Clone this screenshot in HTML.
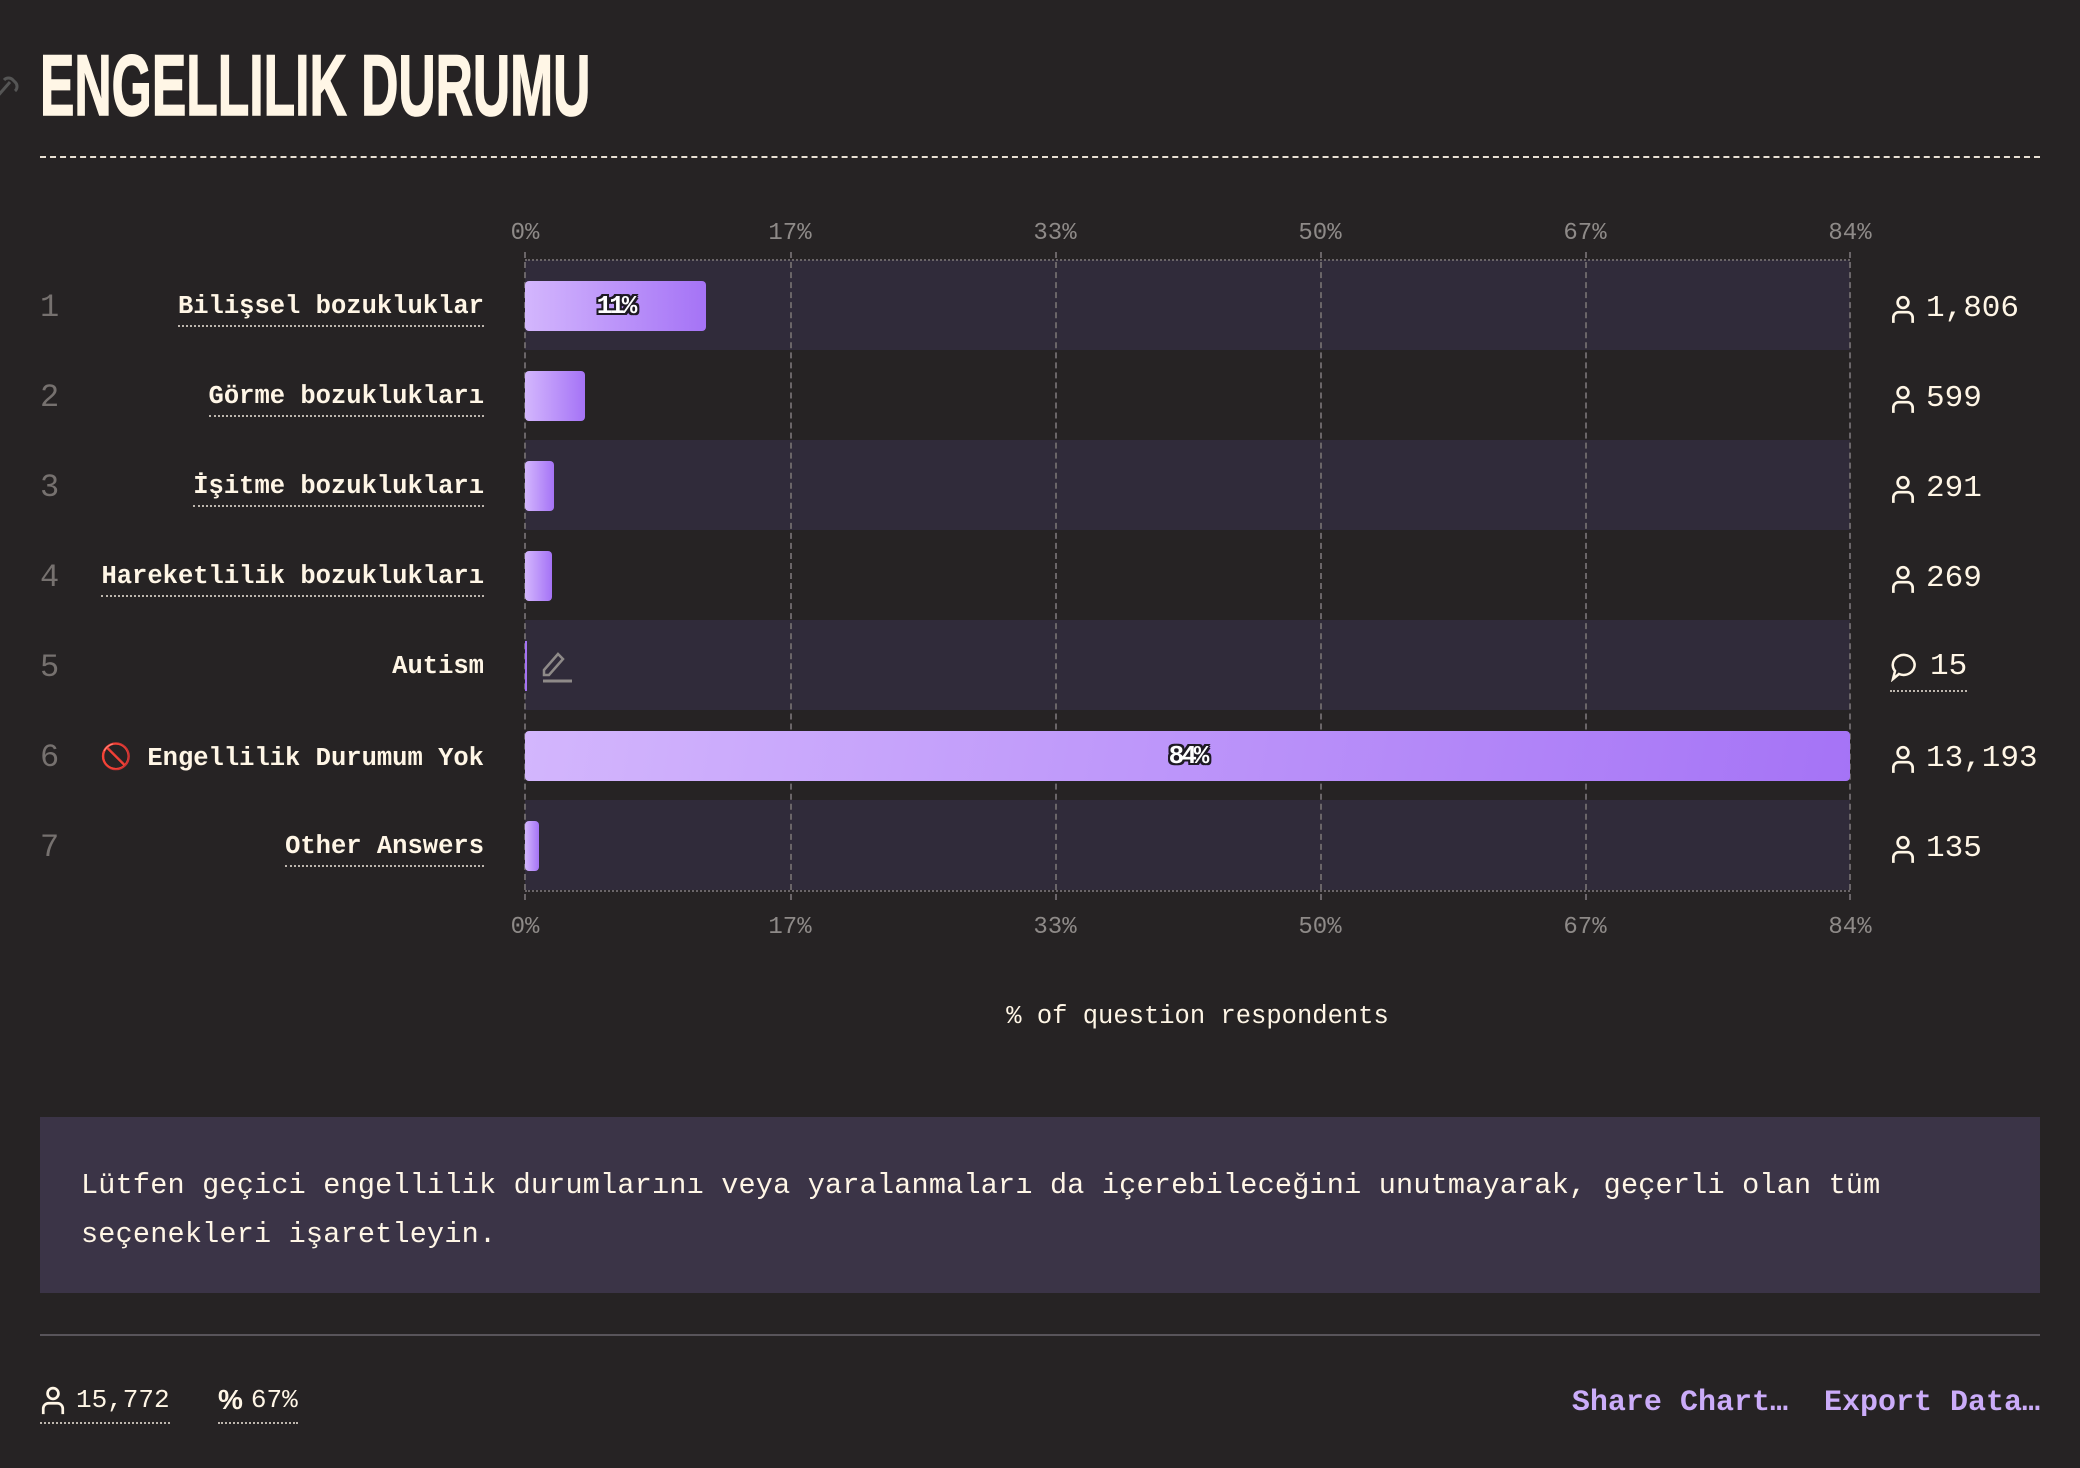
<!DOCTYPE html>
<html><head><meta charset="utf-8"><style>
*{margin:0;padding:0;box-sizing:border-box}
body{width:2080px;height:1468px;background:#262324;position:relative;overflow:hidden;font-family:"Liberation Mono",monospace;color:#fff6e6}
.a{position:absolute}
.title{left:40px;top:36px;font-family:"Liberation Sans Narrow","Liberation Sans",sans-serif;font-weight:700;font-size:86px;line-height:100px;color:#fff6e6;transform:scaleX(0.6);transform-origin:left top;white-space:nowrap;-webkit-text-stroke:1.5px #fff6e6}
.dash{left:40px;top:156px;width:2000px;border-top:2px dashed #e8e0d4}
.band{left:525px;width:1325px;height:90px;background:#302b3a}
.vg{top:252px;height:648px;border-left:2px dashed #6a6568}
.ax{font-size:24px;color:#8e8a88;width:80px;text-align:center;margin-left:-40px}
.num{left:40px;font-size:32px;color:#76716f;width:40px}
.lbl{right:1596px;font-size:25.5px;font-weight:700;white-space:nowrap;text-align:right}
.u{border-bottom:2px dotted #bdb6ae;padding-bottom:4px}
.bar{left:525px;height:50px;border-radius:4px;background:linear-gradient(90deg,#d3b6fd,#a573f6)}
.pct{font-size:26px;font-weight:700;color:#fff;text-shadow:-2px 0 #1e1a24,2px 0 #1e1a24,0 -2px #1e1a24,0 2px #1e1a24,2px 2px #1e1a24,-2px -2px #1e1a24,2px -2px #1e1a24,-2px 2px #1e1a24;letter-spacing:-3px}
.cnt{left:1890px;font-size:31px;white-space:nowrap;display:flex;align-items:center;gap:10px}
</style></head><body>
<svg class="a" style="left:0;top:72px" width="20" height="34" viewBox="0 0 20 34"><path d="M-4 26 L10 10 M4 8 a6 6 0 0 1 9 0 l2 2 a6 6 0 0 1 0 9 M-2 22 a6 6 0 0 0 0 9" stroke="#555" stroke-width="3" fill="none"/></svg>
<div class="a title">ENGELLILIK DURUMU</div>
<div class="a dash"></div>

<div class="a band" style="top:260px"></div>
<div class="a band" style="top:440px"></div>
<div class="a band" style="top:620px"></div>
<div class="a band" style="top:800px"></div>
<div class="a" style="left:525px;top:259px;width:1325px;border-top:2px dotted #6a6568"></div>
<div class="a" style="left:525px;top:890px;width:1325px;border-top:2px dotted #6a6568"></div>
<div class="a vg" style="left:524px"></div><div class="a vg" style="left:790px"></div><div class="a vg" style="left:1055px"></div><div class="a vg" style="left:1320px"></div><div class="a vg" style="left:1585px"></div><div class="a vg" style="left:1849px"></div>

<div class="a ax" style="left:525px;top:220px">0%</div><div class="a ax" style="left:790px;top:220px">17%</div><div class="a ax" style="left:1055px;top:220px">33%</div><div class="a ax" style="left:1320px;top:220px">50%</div><div class="a ax" style="left:1585px;top:220px">67%</div><div class="a ax" style="left:1850px;top:220px">84%</div>
<div class="a ax" style="left:525px;top:914px">0%</div><div class="a ax" style="left:790px;top:914px">17%</div><div class="a ax" style="left:1055px;top:914px">33%</div><div class="a ax" style="left:1320px;top:914px">50%</div><div class="a ax" style="left:1585px;top:914px">67%</div><div class="a ax" style="left:1850px;top:914px">84%</div>

<div class="a num" style="top:289px">1</div><div class="a num" style="top:379px">2</div><div class="a num" style="top:469px">3</div><div class="a num" style="top:559px">4</div><div class="a num" style="top:649px">5</div><div class="a num" style="top:739px">6</div><div class="a num" style="top:829px">7</div>

<div class="a lbl" style="top:292px"><span class="u">Bilişsel bozukluklar</span></div>
<div class="a lbl" style="top:382px"><span class="u">Görme bozuklukları</span></div>
<div class="a lbl" style="top:472px"><span class="u">İşitme bozuklukları</span></div>
<div class="a lbl" style="top:562px"><span class="u">Hareketlilik bozuklukları</span></div>
<div class="a lbl" style="top:652px">Autism</div>
<div class="a lbl" style="top:742px"><span style="color:#e03a3a;font-weight:400">🚫</span> Engellilik Durumum Yok</div>
<div class="a lbl" style="top:832px"><span class="u">Other Answers</span></div>

<div class="a bar" style="top:281px;width:181px;display:flex;align-items:center;justify-content:center"><span class="pct">11%</span></div>
<div class="a bar" style="top:371px;width:60px"></div>
<div class="a bar" style="top:461px;width:29px"></div>
<div class="a bar" style="top:551px;width:27px"></div>
<div class="a" style="left:525px;top:641px;width:2px;height:50px;background:#a573f6"></div>
<svg class="a" style="left:540px;top:648px" width="36" height="36" viewBox="0 0 36 36"><path d="M4 22 L18 6 L23 11 L9 27 H4 Z" stroke="#8e8a88" stroke-width="2.5" fill="none"/><path d="M3 33 H32" stroke="#8e8a88" stroke-width="3"/></svg>
<div class="a bar" style="top:731px;width:1325px;background:linear-gradient(100deg,#d3b6fd,#a573f6);display:flex;align-items:center;justify-content:center"><span class="pct">84%</span></div>
<div class="a bar" style="top:821px;width:14px"></div>

<svg width="0" height="0" style="position:absolute"><defs><symbol id="p" viewBox="0 0 24 28"><circle cx="12" cy="8" r="5" fill="none" stroke="#fff6e6" stroke-width="2.5"/><path d="M3 27 V22 a5 5 0 0 1 5 -5 h8 a5 5 0 0 1 5 5 V27" fill="none" stroke="#fff6e6" stroke-width="2.5"/></symbol></defs></svg>
<div class="a cnt" style="top:291px"><svg width="26" height="30"><use href="#p"/></svg>1,806</div>
<div class="a cnt" style="top:381px"><svg width="26" height="30"><use href="#p"/></svg>599</div>
<div class="a cnt" style="top:471px"><svg width="26" height="30"><use href="#p"/></svg>291</div>
<div class="a cnt" style="top:561px"><svg width="26" height="30"><use href="#p"/></svg>269</div>
<div class="a cnt" style="top:649px;border-bottom:2px dotted #bdb6ae;padding-bottom:6px"><svg width="30" height="30" viewBox="0 0 30 30"><path d="M15 3 a11 10 0 1 1 -6 19 L3 27 L5 19 A11 10 0 0 1 15 3Z" fill="none" stroke="#fff6e6" stroke-width="2.5"/></svg>15</div>
<div class="a cnt" style="top:741px"><svg width="26" height="30"><use href="#p"/></svg>13,193</div>
<div class="a cnt" style="top:831px"><svg width="26" height="30"><use href="#p"/></svg>135</div>

<div class="a" style="left:0;width:2395px;text-align:center;top:1002px;font-size:25.5px">% of question respondents</div>

<div class="a" style="left:40px;top:1117px;width:2000px;height:176px;background:#3b3447;padding:44px 41px;font-size:28.5px;line-height:49px;letter-spacing:0.2px">Lütfen geçici engellilik durumlarını veya yaralanmaları da içerebileceğini unutmayarak, geçerli olan tüm seçenekleri işaretleyin.</div>
<div class="a" style="left:40px;top:1334px;width:2000px;border-top:2px solid #58545a"></div>

<div class="a" style="left:40px;top:1384px;font-size:26px;display:flex;align-items:center;gap:10px;border-bottom:2px dotted #bdb6ae;padding-bottom:6px"><svg width="26" height="32"><use href="#p"/></svg>15,772</div>
<div class="a" style="left:218px;top:1384px;font-size:26px;display:flex;align-items:center;gap:8px;border-bottom:2px dotted #bdb6ae;padding-bottom:6px"><span style="font-size:28px;font-weight:700;font-family:'Liberation Sans',sans-serif">%</span>67%</div>
<div class="a" style="right:40px;top:1386px;font-size:30px;font-weight:700;color:#cbacf9;white-space:nowrap">Share Chart…&nbsp; Export Data…</div>
</body></html>
